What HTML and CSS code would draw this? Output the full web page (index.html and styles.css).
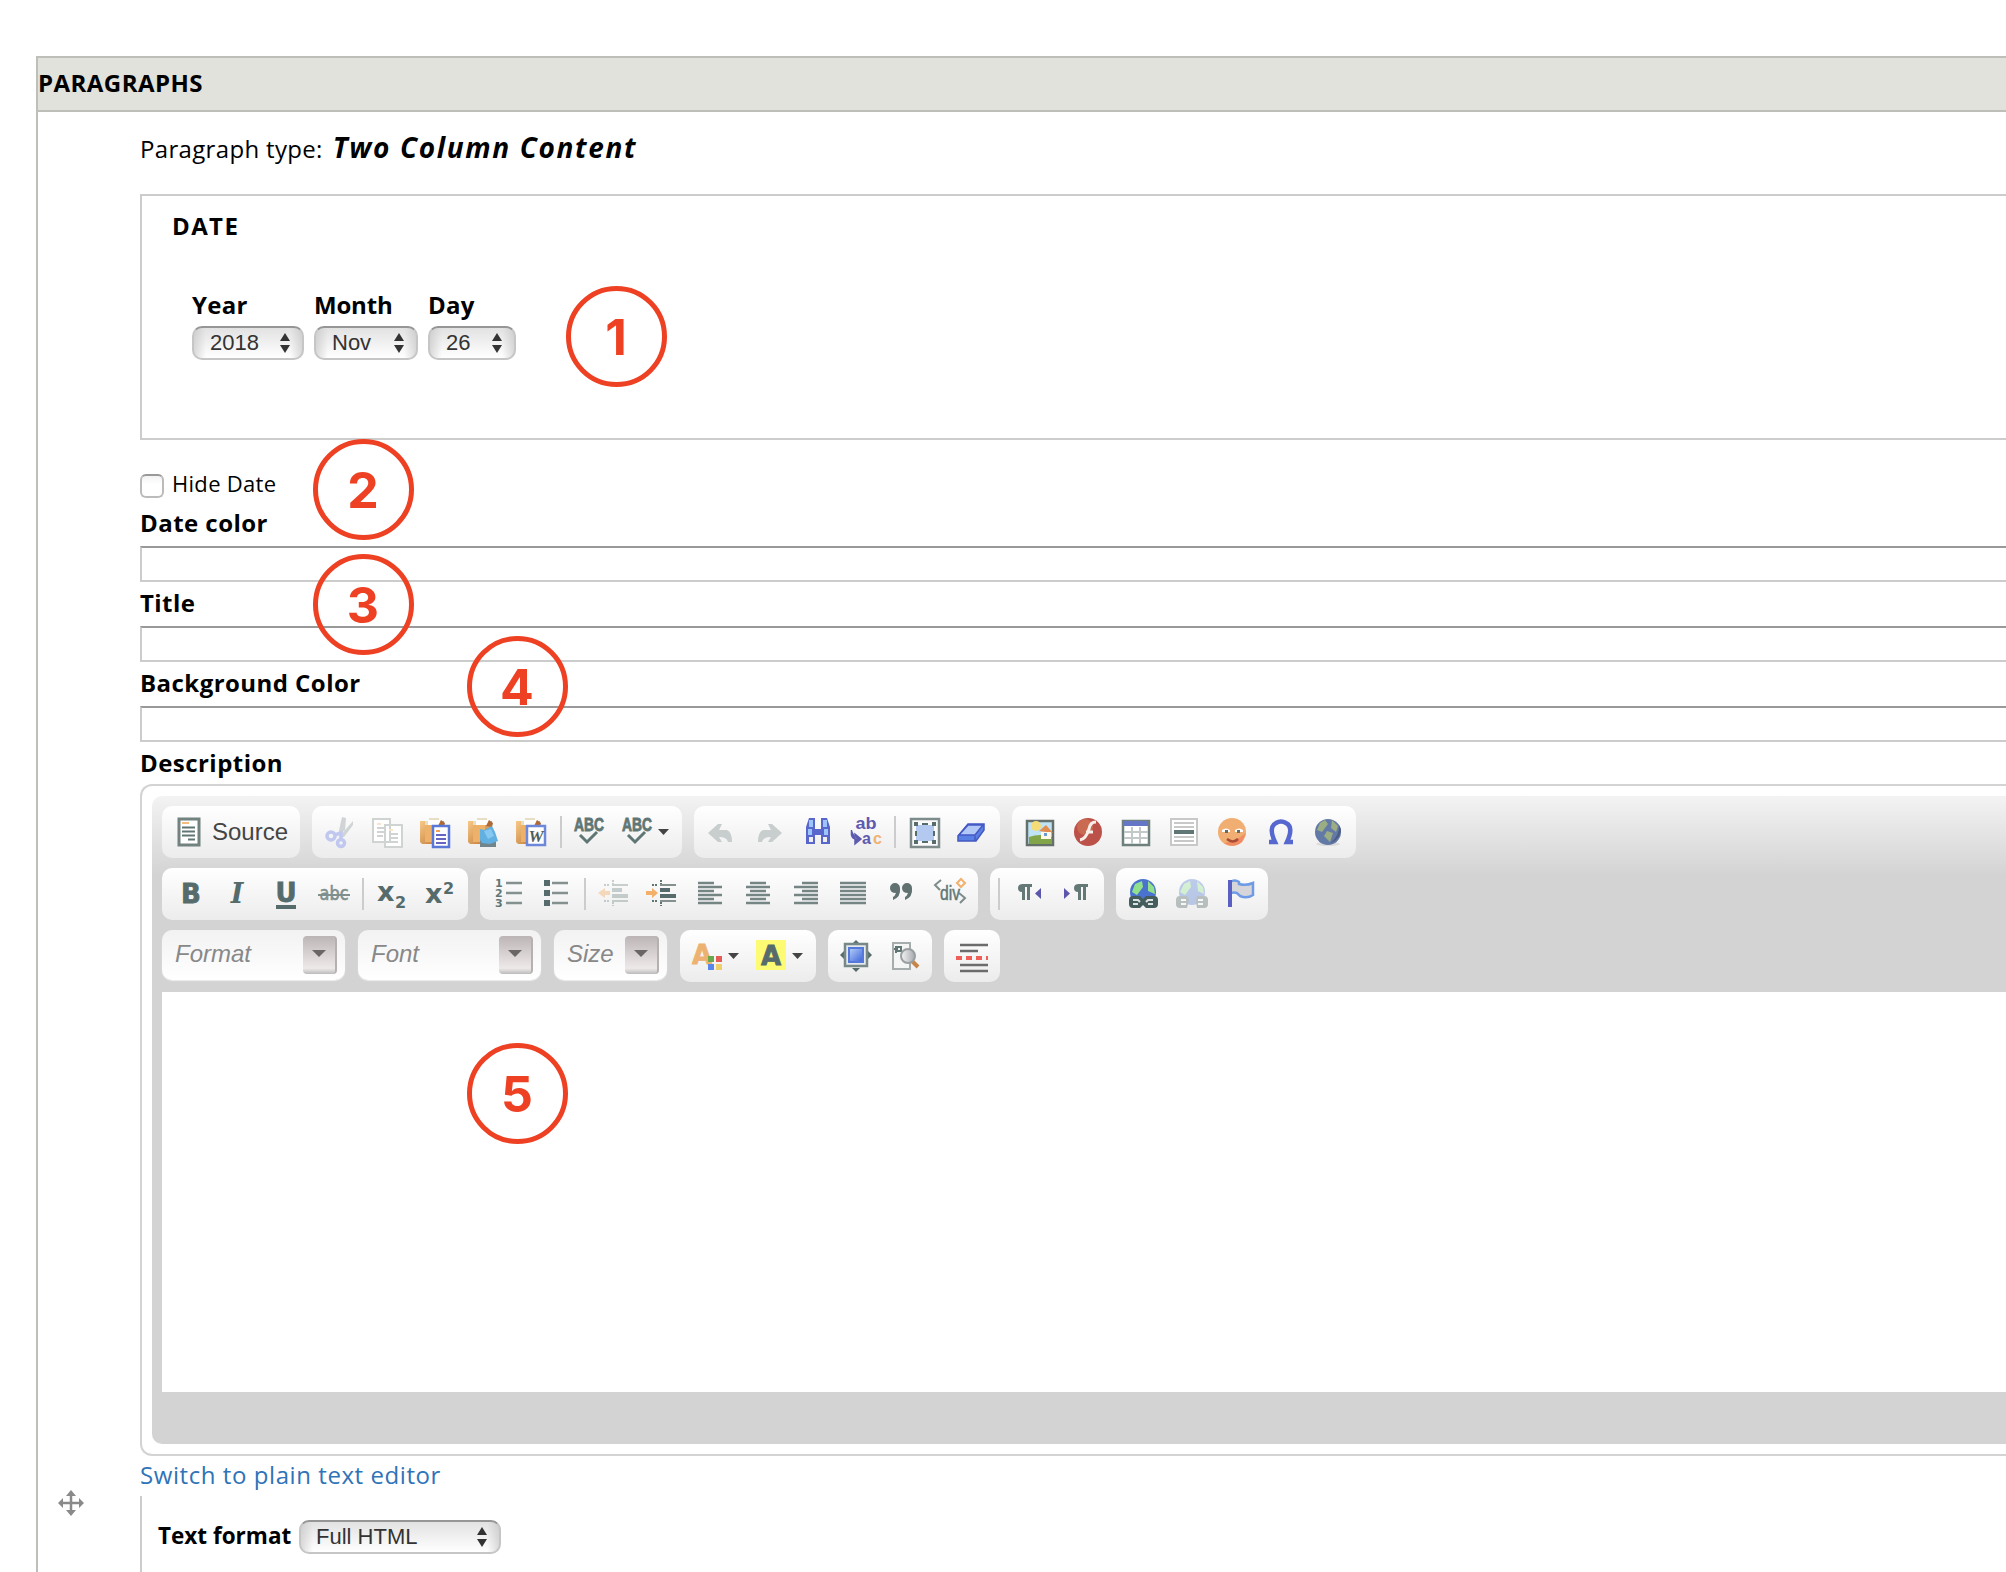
FILE: index.html
```html
<!DOCTYPE html>
<html lang="en">
<head>
<meta charset="utf-8">
<title>Paragraphs</title>
<link rel="stylesheet" href="styles.css">
</head>
<body>
<svg width="0" height="0" class="defs" aria-hidden="true">
  <defs>
    <linearGradient id="tan" x1="0" x2="1" y2="1"><stop offset="0" stop-color="#f8c987"/><stop offset="1" stop-color="#bb7330"/></linearGradient>
    <linearGradient id="blue" x1="0" x2="1" y2="1"><stop offset="0" stop-color="#b9d0f8"/><stop offset="1" stop-color="#3a63da"/></linearGradient>
    <linearGradient id="grey" x1="0" x2="1"><stop offset="0" stop-color="#f4f4f4"/><stop offset="1" stop-color="#a5a9ad"/></linearGradient>
    <g id="clip">
      <path d="M2 5h24v21h-3v2H4l-2-2z" fill="url(#tan)"/>
      <path d="M7 9h12v17H7z" fill="#eeb169"/>
      <path d="M7 9V5h4V2h10v3h4v4z" fill="#e9ddc4"/>
      <path d="M10 4h12v5H10z" fill="#fff"/>
      <path d="M20 10l3-6 4 3-1 4z" fill="#ad6a35"/>
    </g>
    <g id="abc">
      <text x="15" y="15" text-anchor="middle" textLength="30" lengthAdjust="spacingAndGlyphs" class="t-abc">ABC</text>
      <path d="M6 19l7 7 10-10" fill="none" stroke="#5f7675" stroke-width="3"/>
    </g>
    <path id="caret" d="M1 13h11l-5.500 6z" fill="#444"/>
  </defs>
</svg>

<fieldset class="paragraphs">
  <div class="paragraphs-head"><span class="ls-5">PARAGRAPHS</span></div>
  <div class="paragraphs-body">
    <div class="type-row"><span class="type-label">Paragraph type:</span><em class="type-name">Two Column Content</em></div>

    <section class="date-box">
      <div class="date-title">DATE</div>
      <div class="date-cols">
        <div class="date-col year"><label>Year</label><div class="select">2018<svg width="12" height="20" viewBox="0 0 12 20"><path d="M6 0l5 8H1zM6 20l5-8H1z"/></svg></div></div>
        <div class="date-col month"><label>Month</label><div class="select">Nov<svg width="12" height="20" viewBox="0 0 12 20"><path d="M6 0l5 8H1zM6 20l5-8H1z"/></svg></div></div>
        <div class="date-col day"><label>Day</label><div class="select">26<svg width="12" height="20" viewBox="0 0 12 20"><path d="M6 0l5 8H1zM6 20l5-8H1z"/></svg></div></div>
      </div>
    </section>

    <div class="hide-row"><span class="check"></span><span class="hide-label">Hide Date</span></div>
    <div class="field-label">Date color</div><div class="field"></div>
    <div class="field-label">Title</div><div class="field"></div>
    <div class="field-label">Background Color</div><div class="field"></div>
    <div class="field-label desc">Description</div>

    <div class="editor"><div class="editor-inner">
      <div class="bar">
        <div class="group source"><svg class="ic" viewBox="0 0 32 32"><path d="M7 3h20v26H7z" fill="#fff" stroke="#71827f" stroke-width="3"/><path d="M10 7h7" stroke="#f4bd7f" stroke-width="2"/><path d="M10 11.500h13M10 15.500h13M10 19.500h13M16 23.500h7" stroke="#5f7675" stroke-width="2"/></svg><span class="source-text">Source</span></div>
        <div class="group">
          <svg class="ic" viewBox="0 0 32 32"><path d="M14 19L18 1l4 1-1 12zM15 21L29 5v4l-9 12z" fill="#d0d4d5"/><g fill="none" stroke="#c0c8f0" stroke-width="3.500"><circle cx="7" cy="20" r="4"/><circle cx="17" cy="27" r="3.500"/><path d="M10 19l7-2v6"/></g></svg>
          <svg class="ic" viewBox="0 0 32 32" fill="#fff" stroke="#cfd4d3" stroke-width="2"><path d="M1 3h17v23H1zM13 9h17v22H13z"/><path d="M5 12h8M5 16h8M5 20h6M17 18h9M17 22h9M17 26h9"/><path d="M5 8h4M17 14h4" stroke="#fbe3c8"/></svg>
          <svg class="ic" viewBox="0 0 32 32"><g transform="translate(-2)"><use href="#clip"/><path d="M15 10h16v21H15z" fill="#fff" stroke="#5877d6" stroke-width="2.500"/><path d="M18 15h4" stroke="#f4a450" stroke-width="2"/><path d="M18 19h10M18 23h10M18 27h10" stroke="#6665c0" stroke-width="2"/></g></svg>
          <svg class="ic" viewBox="0 0 32 32"><g transform="translate(-2)"><use href="#clip"/><path d="M14 21h16v10H14z" fill="#71858b"/><path d="M14 13l4 1 8-4 3 6 3 9-8 3-8-1-2-3z" fill="#62afe2"/><path d="M18 15l7-2 3 7-6 3z" fill="#86c8ef"/></g></svg>
          <svg class="ic" viewBox="0 0 32 32"><g transform="translate(-2)"><use href="#clip"/><path d="M13 10h18v19H13z" fill="#fff" stroke="#6d87db" stroke-width="2.500"/><text x="22" y="26" text-anchor="middle" class="t-word">W</text></g></svg>
          <i class="sep"></i>
          <svg class="ic" viewBox="0 0 32 32"><use href="#abc"/></svg>
          <svg class="ic" viewBox="0 0 32 32"><use href="#abc"/></svg><svg class="car" viewBox="0 0 16 32"><use href="#caret" x="-5"/></svg>
        </div>
        <div class="group">
          <svg class="ic" viewBox="0 0 32 32"><path d="M2 17l10-9h4l-3 6h8q5 2 5 12h-4q-1-5-9-5l3 5h-4z" fill="#c8cdcd"/></svg>
          <svg class="ic" viewBox="0 0 32 32"><path d="M28 17L18 8h-4l3 6H9q-5 2-5 12h4q1-5 9-5l-3 5h4z" fill="#c8cdcd"/></svg>
          <svg class="ic" viewBox="0 0 32 32"><path d="M4 11l3-9h6v11h6V2h6l3 9v17h-9v-9h-6v9H4z" fill="#5967cd"/><path d="M7 4h4v7H7zM21 4h4v7h-4zM6 13h4v6H6zM22 13h4v6h-4z" fill="#9cc5fb"/><path d="M7 21h4v5H7zM21 21h4v5h-4z" fill="#eee"/></svg>
          <svg class="ic" viewBox="0 0 32 32"><text x="16" y="13" text-anchor="middle" textLength="21" lengthAdjust="spacingAndGlyphs" class="t-ab">ab</text><text x="12" y="28" class="t-ab t-ac">a<tspan fill="#f0b270" x="23">c</tspan></text><path d="M1.500 14v5q1 4 5 4M5 18l6 5-6 5z" stroke="#5d5bb0" stroke-width="1.500" fill="#5d5bb0"/></svg>
          <i class="sep"></i>
          <svg class="ic" viewBox="0 0 32 32"><path d="M3 3h28v28H3z" fill="#fafafa" stroke="#7d8c8b" stroke-width="2.500"/><path d="M8 9h18v16H8z" fill="#b3c9ef"/><g fill="#566d6c"><path d="M6 6h4v4H6zM24 6h4v4h-4zM6 24h4v4H6zM24 24h4v4h-4zM14 7h6v2h-6zM14 25h6v2h-6zM7 15h2v5H7zM25 15h2v5h-2z"/></g></svg>
          <svg class="ic" viewBox="0 0 32 32" stroke="#4358c4" stroke-width="1.500"><path d="M2 20L12 8h16v6l-8 11H2z" fill="#5b80e4"/><path d="M3 19l9-10h15l-8 10z" fill="#b2c8f7"/><path d="M19 20v5" fill="none"/></svg>
        </div>
        <div class="group">
          <svg class="ic" viewBox="0 0 32 32"><path d="M3 5h26v24H3z" fill="#bfe3f4" stroke="#65706a" stroke-width="2.500"/><path d="M5 21q11-4 23 0v7H5z" fill="#83a54a"/><circle cx="12" cy="10" r="5" fill="#f5dc76"/><path d="M15 15l7-6 7 8z" fill="#e38c50"/><path d="M17 16h10v7H17z" fill="#fff8e7"/><path d="M20 17h3v3h-3z" fill="#6a9bd5"/></svg>
          <svg class="ic" viewBox="0 0 32 32"><circle cx="16" cy="16" r="14" fill="#bc5149"/><circle cx="13" cy="11" r="8" fill="#ce7556" opacity=".7"/><path d="M24 6q-6 0-7 7-3 10-9 11M14 16h7" stroke="#f7eeea" stroke-width="3" fill="none"/></svg>
          <svg class="ic" viewBox="0 0 32 32"><path d="M3 5h26v24H3z" fill="#fff" stroke="#6e807d" stroke-width="2.500"/><path d="M4 5h24v5H4z" fill="#6576c7"/><path d="M4 16h24M4 22h24M12 11v17M20 11v17" stroke="#c3c9c8" stroke-width="2"/></svg>
          <svg class="ic" viewBox="0 0 32 32"><path d="M3 3h26v26H3z" fill="#fff" stroke="#c8c8c8" stroke-width="2"/><path d="M6 7h20M6 11h20M6 21h20M6 25h20" stroke="#c8c8c8" stroke-width="2"/><path d="M6 16h20" stroke="#5f7675" stroke-width="4"/></svg>
          <svg class="ic" viewBox="0 0 32 32"><circle cx="16" cy="16" r="14" fill="#f1ae72"/><path d="M8 27q9 6 18-1l4-9q-10 8-22 10z" fill="#f18b63"/><path d="M6 14q4-3 8 0v2H6zM19 14q4-3 8 0v2h-8z" fill="#fff"/><path d="M9 14h3v3H9zM21 14h3v3h-3z" fill="#656b65"/><path d="M11 23q6 5 11 0" fill="none" stroke="#a94c35" stroke-width="2.500"/></svg>
          <svg class="ic" viewBox="0 0 32 32"><path d="M4 26h6q-7-15 1-19 5-3 10 0 8 4 1 19h6" transform="translate(1)" fill="none" stroke="#5668cf" stroke-width="4.500"/></svg>
          <svg class="ic" viewBox="0 0 32 32"><ellipse cx="16" cy="28" rx="12" ry="2" fill="#ddd"/><circle cx="16" cy="16" r="13" fill="#6379a6"/><path d="M8 7l5-3 3 4-6 8-5-2zM20 4l6 6-2 6-5-4zM15 15l6 2-3 9-6-6z" fill="#9bad82"/><path d="M24 24q8-8 3-15 1 10-9 19z" fill="#4b5b84"/></svg>
        </div>
      </div>
      <div class="bar">
        <div class="group">
          <svg class="ic" viewBox="0 0 32 32"><text x="17" y="25" text-anchor="middle" class="t-b">B</text></svg>
          <svg class="ic" viewBox="0 0 32 32"><text x="15" y="25" text-anchor="middle" class="t-i">I</text></svg>
          <svg class="ic" viewBox="0 0 32 32"><text x="16" y="24" text-anchor="middle" class="t-b">U</text><path d="M6 27h20v4H6z" fill="#566b6b"/></svg>
          <svg class="ic" viewBox="0 0 32 32"><text x="16" y="22" text-anchor="middle" textLength="29" lengthAdjust="spacingAndGlyphs" class="t-s">abc</text><path d="M0 17h32" stroke="#7f8f8e" stroke-width="2"/></svg>
          <i class="sep"></i>
          <svg class="ic" viewBox="0 0 32 32"><text x="1" y="23" class="t-x">x<tspan x="19" y="30" class="t-n">2</tspan></text></svg>
          <svg class="ic" viewBox="0 0 32 32"><text x="1" y="25" class="t-x">x<tspan x="19" y="16" class="t-n">2</tspan></text></svg>
        </div>
        <div class="group">
          <svg class="ic" viewBox="0 0 32 32"><text class="t-l" x="3" y="9">1<tspan x="3" y="19">2</tspan><tspan x="3" y="29">3</tspan></text><path d="M14 5h16M14 15h16M14 25h16" stroke="#84918f" stroke-width="2.500"/></svg>
          <svg class="ic" viewBox="0 0 32 32"><path d="M4 2h6v6H4zM4 12h6v6H4zM4 22h6v6H4z" fill="#566b6b"/><path d="M12 5h16M12 15h16M12 25h16" stroke="#84918f" stroke-width="2.500"/></svg>
          <i class="sep"></i>
          <svg class="ic" viewBox="0 0 32 32" opacity=".32"><path d="M14 7h16M14 23h16" stroke="#5f7675" stroke-width="2"/><path d="M14 10h10v4H14zM14 16h16v4H14z" fill="#5f7675"/><path d="M15 2v4M15 24v4M6 7h5M6 23h5" stroke="#5f7675" stroke-width="2" stroke-dasharray="2 1"/><path d="M0 15l7-5v3h5v4H7v3z" fill="#f09a3e"/></svg>
          <svg class="ic" viewBox="0 0 32 32"><path d="M14 7h16M14 23h16" stroke="#84918f" stroke-width="2"/><path d="M14 10h10v4H14zM14 16h16v4H14z" fill="#566b6b"/><path d="M15 2v4M15 24v4M6 7h5M6 23h5" stroke="#5f7675" stroke-width="2" stroke-dasharray="2 1"/><path d="M12 15L6 10v3H0v4h6v3z" fill="#f2b06b"/></svg>
          <svg class="ic" viewBox="0 0 32 32"><path d="M4 5h16M4 9h24M4 13h16M4 17h24M4 21h16M4 25h24" stroke="#748583" stroke-width="2.400"/></svg>
          <svg class="ic" viewBox="0 0 32 32"><path d="M8 5h16M4 9h24M8 13h16M4 17h24M8 21h16M4 25h24" stroke="#748583" stroke-width="2.400"/></svg>
          <svg class="ic" viewBox="0 0 32 32"><path d="M12 5h16M4 9h24M12 13h16M4 17h24M12 21h16M4 25h24" stroke="#748583" stroke-width="2.400"/></svg>
          <svg class="ic" viewBox="0 0 32 32"><path d="M2 5h26M2 9h26M2 13h26M2 17h26M2 21h26M2 25h26" stroke="#748583" stroke-width="2.400"/></svg>
          <svg class="ic" viewBox="0 0 32 32"><path d="M4 10a5 5 0 0 1 10 0q1 9-7 12v-3q2-1 3-4-6 0-6-5zM16 10a5 5 0 0 1 10 0q1 9-7 12v-3q2-1 3-4-6 0-6-5z" fill="#60716f"/></svg>
          <svg class="ic" viewBox="0 0 32 32"><path d="M7 2L1 7l5 5M25 15l6 5-5 5" stroke="#7d8c8b" stroke-width="2" fill="none"/><text x="16" y="22" text-anchor="middle" textLength="20" lengthAdjust="spacingAndGlyphs" class="t-d">div</text><path d="M27 1l4 4-4 4-4-4z" fill="none" stroke="#f2b06b" stroke-width="2"/></svg>
        </div>
        <div class="group">
          <i class="sep"></i>
          <svg class="ic" viewBox="0 0 32 32"><path d="M6 10q0-4 5-4h9v3h-2v13h-3V9h-2v13h-3v-8q-4 0-4-4z" fill="#647876"/><path d="M29 10v11l-6-5.500z" fill="#5b58ac"/></svg>
          <svg class="ic" viewBox="0 0 32 32"><path d="M14 10q0-4 5-4h9v3h-2v13h-3V9h-2v13h-3v-8q-4 0-4-4z" fill="#647876"/><path d="M4 10v11l6-5.500z" fill="#5b58ac"/></svg>
        </div>
        <div class="group">
          <svg class="ic" viewBox="0 0 32 32"><circle cx="15" cy="14" r="13" fill="#4973cf"/><path d="M7 6l7-3 1 6-6 8-5-3zM20 3l6 6 1 7-7-3z" fill="#91e18c"/><path d="M1 22q0-4 4-4h7l3 3 3-3h8q4 0 4 4v4q0 4-4 4h-8l-3-3-3 3H5q-4 0-4-4z" fill="#455d5c"/><path d="M5 22h5l2 2M5 26h5M25 22h-5l-2 2M25 26h-5" stroke="#dce2e2" stroke-width="2" fill="none"/></svg>
          <svg class="ic" viewBox="0 0 32 32" opacity=".34"><circle cx="16" cy="14" r="13" fill="#4973cf"/><path d="M8 6l6-3 1 6-6 8-5-3zM21 3l6 6 1 7-6-3z" fill="#91e18c"/><path d="M0 22q0-4 4-4h7l2 4-2 8H4q-4 0-4-4zM32 22q0-4-4-4h-7l-1 6 1 6h7q4 0 4-4z" fill="#455d5c"/><path d="M5 22h5M5 26h5M27 22h-5M27 26h-5" stroke="#fff" stroke-width="2"/></svg>
          <svg class="ic" viewBox="0 0 32 32"><path d="M6 4q5-3 9 0v2q7 2 14-1v12q-6 4-13 1l-3-3q-3-1-7 0z" fill="#d6d6da" stroke="#6f9ae6" stroke-width="2.500"/><path d="M6 2v27" stroke="#5b5fc4" stroke-width="4"/></svg>
        </div>
      </div>
      <div class="bar">
        <div class="combo wide">Format<b class="drop"></b></div>
        <div class="combo wide">Font<b class="drop"></b></div>
        <div class="combo size">Size<b class="drop"></b></div>
        <div class="tail">
        <div class="group">
          <svg class="ic" viewBox="0 0 32 32"><text x="10" y="24" text-anchor="middle" class="t-b t-orange">A</text><path d="M16 16h6v6h-6z" fill="#68a94c"/><path d="M24 16h6v6h-6z" fill="#e65b55"/><path d="M16 24h6v6h-6z" fill="#5a86ea"/><path d="M24 24h6v6h-6z" fill="#edd06c"/></svg><svg class="car" viewBox="0 0 16 32"><use href="#caret" x="-5"/></svg>
          <svg class="ic" viewBox="0 0 32 32"><path d="M0 0h30v30H0z" fill="#fdfb73"/><text x="15" y="25" text-anchor="middle" class="t-b">A</text></svg><svg class="car" viewBox="0 0 16 32"><use href="#caret" x="-5"/></svg>
        </div>
        <div class="group">
          <svg class="ic" viewBox="0 0 32 32"><path d="M16 0l4 4h-8zM16 32l4-4h-8zM0 15l4-4v8zM32 15l-4-4v8z" fill="#566b6b"/><path d="M5 4h22v22H5z" fill="#e4e9ef" stroke="#768986" stroke-width="2.500"/><path d="M9 8h14v14H9z" fill="url(#blue)" stroke="#5479da" stroke-width="2"/></svg>
          <svg class="ic" viewBox="0 0 32 32"><path d="M5 3h17v26H5z" fill="#f4f5f5" stroke="#a6adad" stroke-width="2"/><path d="M6 9h4M8 13V7h5v4H9" stroke="#5f7675" stroke-width="2" fill="none"/><path d="M24 21l6 6" stroke="#c78648" stroke-width="4"/><circle cx="20" cy="16" r="7" fill="url(#grey)" stroke="#999fa0" stroke-width="2"/></svg>
        </div>
        <div class="group">
          <svg class="ic" viewBox="0 0 32 32"><path d="M4 5h28M4 11h18M4 25h28M4 31h28" stroke="#6c6c6c" stroke-width="2.400"/><path d="M0 18h32" stroke="#ed5f57" stroke-width="4" stroke-dasharray="6 4"/></svg>
        </div>
        </div>
      </div>
      <div class="canvas"></div>
    </div></div>

    <div class="switch">Switch to plain text editor</div>
    <div class="format"><span class="format-label">Text format</span><div class="select">Full HTML<svg width="12" height="20" viewBox="0 0 12 20"><path d="M6 0l5 8H1zM6 20l5-8H1z"/></svg></div></div>
  </div>
</fieldset>

<svg class="drag" viewBox="0 0 28 28"><path d="M14 4v20M4 14h20" stroke="#8a8a8a" stroke-width="2.500"/><path d="M14 1l5 6H9zM14 27l5-6H9zM1 14l5-5v10zM27 14l-5-5v10z" fill="#8a8a8a"/></svg>

<div class="mark m1">1</div>
<div class="mark m2">2</div>
<div class="mark m3">3</div>
<div class="mark m4">4</div>
<div class="mark m5">5</div>
</body>
</html>
```
FILE: styles.css
```css
* { box-sizing: border-box; }
body { margin: 0; width: 2006px; height: 1572px; overflow: hidden; position: relative; background: #fff; color: #000; font: 24px "Open Sans", "Noto Sans", sans-serif; }
.defs { position: absolute; }
.paragraphs { margin: 56px 0 0 36px; padding: 0; min-width: 0; height: 1516px; border: 2px solid #bebfb9; border-width: 2px 0 0 2px; }
.paragraphs-head { height: 54px; border-bottom: 2px solid #bebfb9; background: #e1e2dc; font-weight: 700; line-height: 50px; letter-spacing: .45px; }
.paragraphs-body { padding-left: 102px; }

.type-row { display: flex; align-items: baseline; gap: 10px; height: 82px; padding-top: 15px; line-height: 40px; }
.type-label { letter-spacing: .33px; }
.type-name { font-size: 28px; font-weight: 700; letter-spacing: 1.65px; }

.date-box { height: 246px; border: 2px solid #ccc; border-right: 0; padding: 14px 0 0 30px; font-weight: 700; line-height: 32px; }
.date-title { letter-spacing: 1.4px; }
.date-cols { display: flex; gap: 10px; margin: 47px 0 0 20px; }
.date-col label { display: block; height: 37px; }
.year { width: 112px; }
.month { width: 104px; }
.day { width: 88px; }
.year label, .day label { letter-spacing: .3px; }
.month label { letter-spacing: -.2px; }
.select { display: flex; align-items: center; justify-content: space-between; height: 34px; padding: 0 11px 1px 16px; border: 2px solid #c6c6c6; border-top-color: #969696; border-radius: 10px; background: linear-gradient(90deg, rgba(190,190,190,.55), rgba(255,255,255,0) 12px, rgba(255,255,255,0) calc(100% - 12px), rgba(190,190,190,.55)), linear-gradient(#e2e2e2, #fff); color: #333; font: 22px "Liberation Sans", Arial, sans-serif; letter-spacing: 0; }
.select svg { fill: #333; }

.hide-row { display: flex; align-items: flex-start; gap: 8px; height: 62px; padding-top: 34px; }
.check { width: 24px; height: 24px; border: 2px solid #bbb; border-top-color: #999; border-radius: 6px; background: linear-gradient(#f3f3f3, #fff 8px); }
.hide-label { font-size: 22px; line-height: 19px; letter-spacing: .3px; }
.field-label { height: 44px; font-weight: 700; line-height: 41px; letter-spacing: .45px; }
.field { height: 36px; border: 2px solid #ccc; border-top-color: #999; border-right: 0; }
.desc { height: 42px; }

.editor { height: 672px; padding: 10px 0 10px 10px; border: 2px solid #d3d3d3; border-right: 0; border-radius: 12px 0 0 12px; }
.editor-inner { height: 648px; padding: 10px 0 0 10px; border-radius: 10px 0 0 10px; background: linear-gradient(#f3f3f3, #d3d3d3 80px); }
.bar { display: flex; gap: 12px; height: 52px; margin-bottom: 10px; }
.group { display: flex; height: 52px; padding: 10px 4px; border-radius: 10px; background: linear-gradient(#fff, #ececec); }
.ic { flex: none; width: 32px; height: 32px; margin: 0 8px; overflow: visible; }
.car { width: 16px; height: 32px; overflow: visible; }
.sep { width: 2px; height: 32px; margin: 0 4px; background: #ccc; }
.source { width: 138px; padding-left: 2px; }
.source-text { color: #444; font: 24px/32px "Liberation Sans", Arial, sans-serif; }
.combo { display: flex; justify-content: space-between; height: 50px; margin-right: 1px; padding: 6px 8px 6px 13px; border-radius: 10px; background: linear-gradient(#f2f2f2, #fff); box-shadow: 0 1px 1px #eee; color: #888; font: italic 24px/36px "Liberation Sans", Arial, sans-serif; }
.wide { width: 183px; }
.size { width: 113px; }
.drop { width: 34px; height: 38px; border-radius: 4px; background: linear-gradient(#bdb5b5, #eee9e9 85%, #bbb); border-right: 2px solid #b7b0b0; }
.drop::after { content: ""; display: block; margin: 14px auto 0; width: 0; border: 7px solid transparent; border-top: 7px solid #6b6666; border-bottom: 0; }
.tail { display: flex; gap: 12px; }
.canvas { height: 400px; background: #fff; }

.t-abc { font: 700 18px "Liberation Sans", sans-serif; fill: #5f7675; stroke: #5f7675; stroke-width: .8px; }
.t-word { font: italic 700 17px "Liberation Serif", serif; fill: #4c5f5e; }
.t-ab { font: 700 16px/1 "Liberation Sans", sans-serif; fill: #5d5bb0; }
.t-b { font: 700 26px "DejaVu Sans", sans-serif; fill: #566b6b; stroke: #566b6b; stroke-width: .8px; }
.t-orange { fill: #edb272; stroke: #edb272; }
.t-i { font: italic 700 27px "DejaVu Serif", serif; fill: #566b6b; }
.t-s { font: 20px "DejaVu Sans", sans-serif; fill: #7f8f8e; stroke: #7f8f8e; stroke-width: .6px; }
.t-x { font: 700 27px "DejaVu Sans", sans-serif; fill: #566b6b; }
.t-n { font-size: 16px; }
.t-l { font: 700 11px "DejaVu Sans", sans-serif; fill: #5f7675; }
.t-d { font: 20px "Liberation Sans", sans-serif; fill: #5f7675; stroke: #5f7675; stroke-width: .5px; }

.switch { height: 40px; color: #2f73b8; line-height: 38px; letter-spacing: .57px; }
.format { display: flex; height: 76px; padding: 24px 0 0 16px; border-left: 2px solid #ccc; }
.format-label { width: 141px; font-size: 22.500px; font-weight: 700; line-height: 32px; white-space: nowrap; }
.format .select { width: 202px; padding-left: 15px; }

.drag { position: absolute; left: 57px; top: 1489px; width: 28px; height: 28px; }
.mark { position: absolute; width: 101px; height: 101px; border: 5px solid #ee4023; border-radius: 50%; color: #ee4023; font: 700 50px/93px "Inter", "Liberation Sans", sans-serif; text-align: center; text-indent: -1px; }
.m1 { left: 566px; top: 286px; }
.m2 { left: 313px; top: 439px; }
.m3 { left: 313px; top: 554px; }
.m4 { left: 467px; top: 636px; }
.m5 { left: 467px; top: 1043px; }
```
